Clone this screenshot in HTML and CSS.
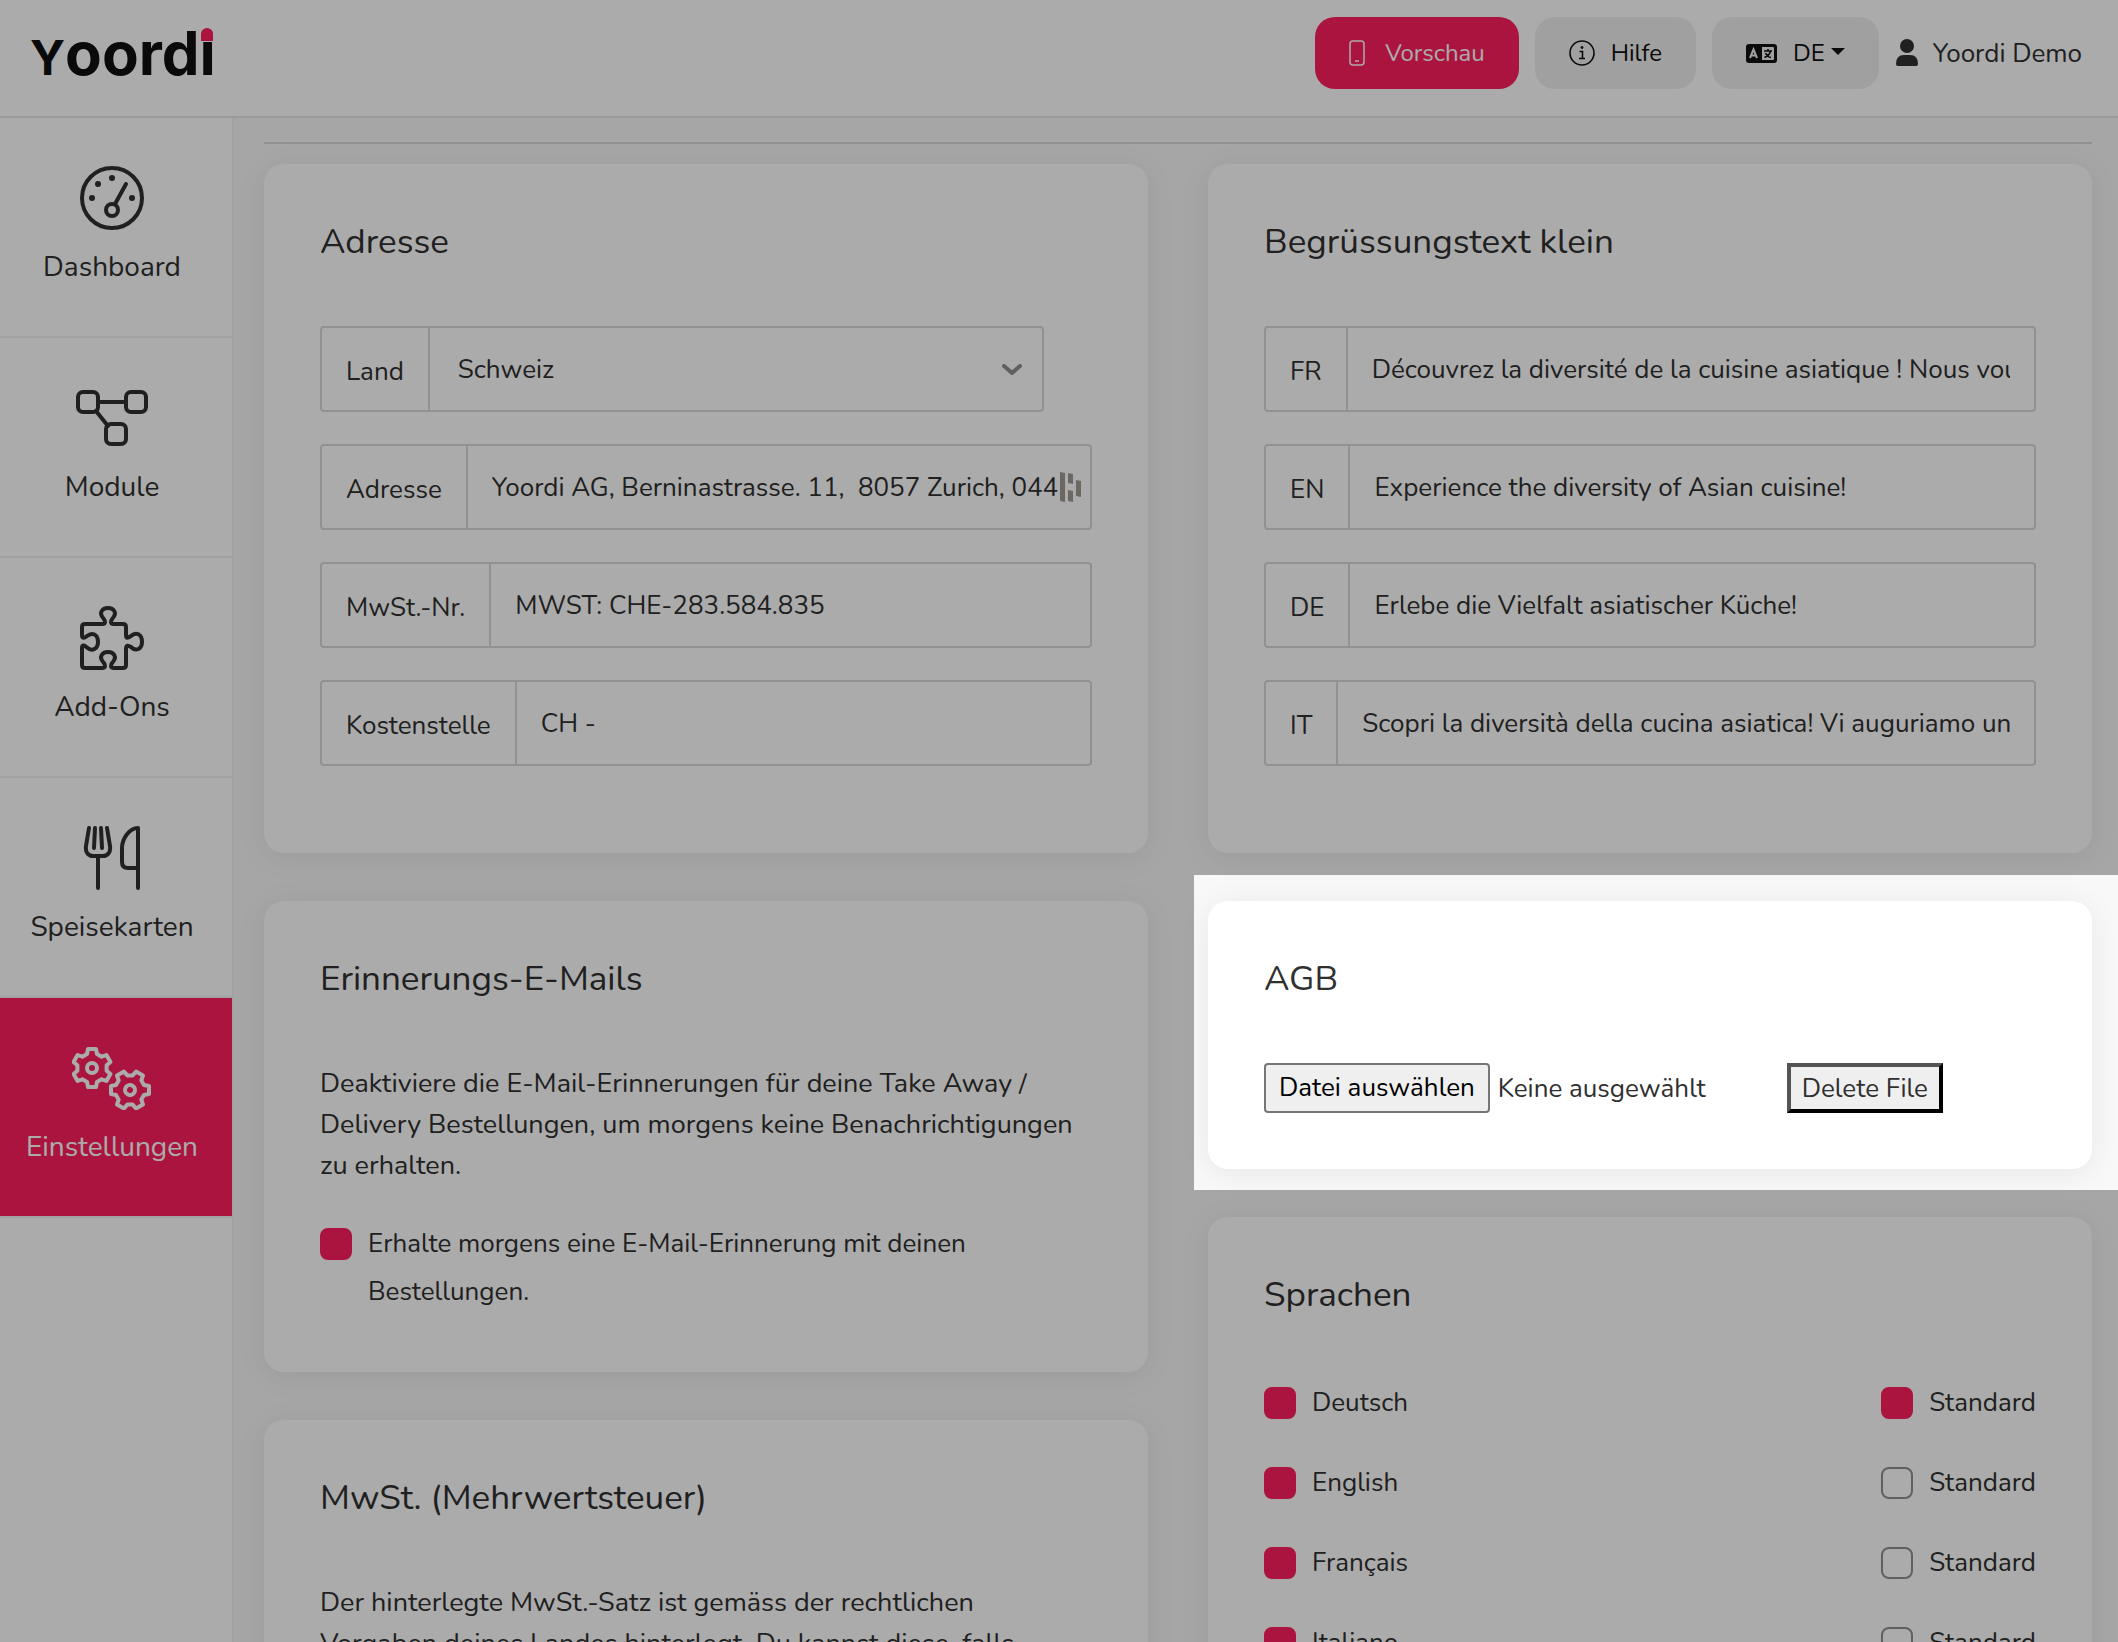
FILE: index.html
```html
<!DOCTYPE html>
<html lang="de">
<head>
  <meta charset="UTF-8">
  <meta name="viewport" content="width=device-width, initial-scale=1.0">
  <title>Yoordi - Einstellungen</title>
  <link rel="stylesheet" href="styles.css">
</head>
<body>
  <header class="topbar">
    <a class="logo" href="#"><span class="logo-y">Y</span>oord<span class="logo-i">i</span></a>
    <div class="topbar-actions">
      <button class="button button-primary">
        <svg width="16" height="26" viewBox="0 0 16 26" fill="none" stroke="currentColor" stroke-width="1.500"><rect x="1" y="1" width="14" height="24" rx="3"/><path d="M6 21h4"/></svg>
        Vorschau
      </button>
      <button class="button">
        <svg width="26" height="26" viewBox="0 0 26 26" fill="none" stroke="currentColor" stroke-width="1.600"><circle cx="13" cy="13" r="12"/><path d="M10.500 11.500h3v7M10 18.500h6"/><circle cx="13" cy="7.500" r="1" fill="currentColor" stroke-width="1"/></svg>
        Hilfe
      </button>
      <button class="button">
        <svg width="31" height="20" viewBox="0 0 31 20"><rect y="1" width="31" height="19" rx="3" fill="currentColor"/><path d="M16 4h11q1 0 1 1v11q0 1-1 1H16z" fill="#efefef"/><path d="M4 15L7.500 6.500L11 15M5 12.500h5" fill="none" stroke="#efefef" stroke-width="2"/><path d="M18 8h8M22 6v2M18.500 14.500q5-2 6-6.500M19.500 10q2 4 5.500 4.500" fill="none" stroke="currentColor" stroke-width="1.600"/></svg>
        <span>DE<span class="caret"></span></span>
      </button>
      <a class="user" href="#">
        <svg width="24" height="28" viewBox="0 0 24 28" fill="currentColor"><circle cx="12" cy="7" r="7"/><path d="M1 25q0-9 8-9h6q8 0 8 9 0 2-2 2H3q-2 0-2-2z"/></svg>
        Yoordi Demo
      </a>
    </div>
  </header>

  <div class="layout">
    <nav class="sidebar">
      <a class="nav-item" href="#">
        <svg width="64" height="64" viewBox="0 0 64 64"><circle cx="32" cy="32" r="30"/><circle cx="32" cy="44" r="6"/><path d="M35 38L46 18"/><g class="dots"><circle cx="12" cy="32" r="3"/><circle cx="18" cy="18" r="3"/><circle cx="32" cy="12" r="3"/><circle cx="52" cy="32" r="3"/></g></svg>
        Dashboard
      </a>
      <a class="nav-item" href="#">
        <svg width="72" height="64" viewBox="0 0 72 64"><rect x="2" y="6" width="20" height="20" rx="5"/><rect x="50" y="6" width="20" height="20" rx="5"/><rect x="30" y="38" width="20" height="20" rx="5"/><path d="M22 16h28M20 25l12 15"/></svg>
        Module
      </a>
      <a class="nav-item" href="#">
        <svg width="64" height="64" viewBox="0 0 64 64"><path d="M2 29V21Q2 18 5 18H22C26 18 25.500 15 23.500 12.500C18.500 7 22 2 28 2C34 2 37.500 7 32.500 12.500C30.500 15 30 18 34 18H43Q46 18 46 21V29C46 33 48 32 51 30C56 25.500 62 28 62 36C62 43 56 46 51 41C48 39 46 39 46 43V59Q46 62 43 62H34C30 62 30.500 58.500 32.500 56.500C37.500 51 34 46 28 46C22 46 18.500 51 23.500 56.500C25.500 58.500 26 62 22 62H5Q2 62 2 59V42C2 38.500 4 39 7 41.500C12 46 18 43 18 36C18 28 12 26 7 30C4 32.500 2 32.500 2 29Z"/></svg>
        Add-Ons
      </a>
      <a class="nav-item" href="#">
        <svg width="64" height="64" viewBox="0 0 64 64"><path d="M9 2L6 20C5 27 9 30 13 30H23C27 30 31 27 30 20L27 2M15 2L14 22M21 2L22 22M18 30V62M58 62V2C50 2 42 12 42 22V36Q42 42 48 42H58"/></svg>
        Speisekarten
      </a>
      <a class="nav-item active" href="#">
        <svg width="80" height="64" viewBox="0 0 80 64">
          <defs>
            <g id="gear"><path d="M-4-19L4-19 5-14 9.620-11.330 14.450-12.960 18.450-6.040 14.620-2.670 14.620 2.670 18.450 6.040 14.450 12.960 9.620 11.330 5 14 4 19-4 19-5 14-9.620 11.330-14.450 12.960-18.450 6.040-14.620 2.670-14.620-2.670-18.450-6.040-14.450-12.960-9.620-11.330-5-14Z"/><circle r="5"/></g>
          </defs>
          <use href="#gear" transform="translate(20 22)"/>
          <use href="#gear" transform="translate(58 44) rotate(30)"/>
        </svg>
        Einstellungen
      </a>
    </nav>

    <main class="content">
      <hr>
      <div class="columns">
        <div class="column">
          <section class="card">
            <h2>Adresse</h2>
            <div class="fields">
              <div class="field field-select">
                <label for="land">Land</label>
                <select id="land"><option>Schweiz</option></select>
                <svg class="chevron" width="20" height="12" viewBox="0 0 20 12"><path d="M2 2l8 7 8-7"/></svg>
              </div>
              <div class="field">
                <label for="adresse">Adresse</label>
                <input id="adresse" type="text" value="Yoordi AG, Berninastrasse. 11,&nbsp; 8057 Zurich, 044 272 11 11">
                <svg class="autofill" width="21" height="30" viewBox="0 0 21 30"><path d="M0 0l5 1v29l-5-1zM8 1l5 1v10l-5-1zM8 18l5 1v11l-5-1zM16 8l5 1v16l-5-1z"/></svg>
              </div>
              <div class="field">
                <label for="mwst-nr">MwSt.-Nr.</label>
                <input id="mwst-nr" type="text" value="MWST: CHE-283.584.835">
              </div>
              <div class="field">
                <label for="kostenstelle">Kostenstelle</label>
                <input id="kostenstelle" type="text" value="CH -">
              </div>
            </div>
          </section>

          <section class="card">
            <h2>Erinnerungs-E-Mails</h2>
            <p>Deaktiviere die E-Mail-Erinnerungen für deine Take Away / Delivery Bestellungen, um morgens keine Benachrichtigungen zu erhalten.</p>
            <label class="check"><input type="checkbox" checked> <span>Erhalte morgens eine E-Mail-Erinnerung mit deinen Bestellungen.</span></label>
          </section>

          <section class="card">
            <h2>MwSt. (Mehrwertsteuer)</h2>
            <p>Der hinterlegte MwSt.-Satz ist gemäss der rechtlichen Vorgaben deines Landes hinterlegt. Du kannst diese, falls notwendig, anpassen.</p>
          </section>
        </div>

        <div class="column">
          <section class="card">
            <h2>Begrüssungstext klein</h2>
            <div class="fields">
              <div class="field">
                <label for="text-fr">FR</label>
                <input id="text-fr" type="text" value="Découvrez la diversité de la cuisine asiatique ! Nous vous souhaitons un bon appétit !">
              </div>
              <div class="field">
                <label for="text-en">EN</label>
                <input id="text-en" type="text" value="Experience the diversity of Asian cuisine!">
              </div>
              <div class="field">
                <label for="text-de">DE</label>
                <input id="text-de" type="text" value="Erlebe die Vielfalt asiatischer Küche!">
              </div>
              <div class="field">
                <label for="text-it">IT</label>
                <input id="text-it" type="text" value="Scopri la diversità della cucina asiatica! Vi auguriamo un buon appetito!">
              </div>
            </div>
          </section>

          <section class="card spotlight">
            <h2>AGB</h2>
            <div class="upload">
              <div class="file">
                <input class="file-input" id="agb" type="file">
                <label class="file-button" for="agb">Datei auswählen</label>
                <span>Keine ausgewählt</span>
              </div>
              <button class="delete-button">Delete File</button>
            </div>
          </section>

          <section class="card">
            <h2>Sprachen</h2>
            <div class="languages">
              <div class="language">
                <label class="check"><input type="checkbox" checked> <span>Deutsch</span></label>
                <label class="check"><input type="checkbox" checked> <span>Standard</span></label>
              </div>
              <div class="language">
                <label class="check"><input type="checkbox" checked> <span>English</span></label>
                <label class="check"><input type="checkbox"> <span>Standard</span></label>
              </div>
              <div class="language">
                <label class="check"><input type="checkbox" checked> <span>Français</span></label>
                <label class="check"><input type="checkbox"> <span>Standard</span></label>
              </div>
              <div class="language">
                <label class="check"><input type="checkbox" checked> <span>Italiano</span></label>
                <label class="check"><input type="checkbox"> <span>Standard</span></label>
              </div>
            </div>
          </section>
        </div>
      </div>
    </main>
  </div>
</body>
</html>
```
FILE: styles.css
```css
* {
  box-sizing: border-box;
}

body {
  margin: 0;
  height: 100vh;
  overflow: hidden;
  background-color: #f8f8f8;
  color: #303030;
  font-family: Nunito, Lato, sans-serif;
  font-size: 26px;
}

button,
input,
select {
  font: inherit;
  color: inherit;
}

a {
  color: inherit;
  text-decoration: none;
}

/* Header */
.topbar {
  display: flex;
  justify-content: space-between;
  align-items: flex-start;
  height: 118px;
  padding: 17px 36px 0 30px;
  background-color: white;
  border-bottom: 2px solid #e8e8e8;
}

.logo {
  color: #101010;
  font-family: Inter, sans-serif;
  font-size: 60px;
  font-weight: 700;
  line-height: 72px;
}

.logo-y {
  font-size: 48px;
}

.logo-i {
  position: relative;
}

.logo-i::before {
  content: "";
  position: absolute;
  top: 11px;
  left: 2px;
  width: 12px;
  height: 13px;
  background-color: #ff1e5e;
  border-radius: 6px 6px 0 0;
}

.topbar-actions {
  display: flex;
  align-items: center;
  gap: 16px;
}

.button {
  display: flex;
  align-items: center;
  gap: 16px;
  height: 72px;
  padding: 0 34px;
  border: none;
  border-radius: 20px;
  background-color: #efefef;
  color: #101010;
  font-size: 24px;
  cursor: pointer;
}

.button-primary {
  gap: 20px;
  background-color: #ff1e5e;
  color: white;
}

.caret {
  display: inline-block;
  margin-left: 6px;
  border: 7px solid transparent;
  border-top-color: currentColor;
  border-bottom: none;
  vertical-align: 6px;
}

.user {
  display: flex;
  align-items: center;
  gap: 14px;
}

.layout {
  display: flex;
}

/* Sidebar */
.sidebar {
  flex: 0 0 234px;
  min-height: calc(100vh - 118px);
  background-color: white;
  border-right: 2px solid #f0f0f0;
}

.nav-item {
  display: flex;
  flex-direction: column;
  align-items: center;
  gap: 16px;
  height: 220px;
  padding: 48px 8px 0 0;
  border-bottom: 2px solid #f0f0f0;
  font-size: 28px;
  line-height: 42px;
}

.nav-item svg {
  fill: none;
  stroke: currentColor;
  stroke-width: 4;
  stroke-linecap: round;
  stroke-linejoin: round;
}

.nav-item .dots {
  fill: currentColor;
  stroke: none;
}

.nav-item.active {
  background-color: #ff1e5e;
  background-clip: padding-box;
  color: white;
}

/* Content */
.content {
  flex: 1;
  padding: 24px 26px 0 30px;
}

hr {
  margin: 0 0 20px;
  border: none;
  border-top: 2px solid #d8d8d8;
}

.columns {
  display: grid;
  grid-template-columns: 1fr 1fr;
  gap: 60px;
}

.column {
  display: flex;
  flex-direction: column;
  gap: 48px;
  min-width: 0;
}

.card {
  padding: 56px;
  background-color: white;
  border-radius: 20px;
  box-shadow: 0 4px 30px rgba(0, 0, 0, 0.07);
}

h2 {
  margin: 0 0 62px;
  font-size: 35px;
  font-weight: 400;
  line-height: 44px;
}

p {
  margin: 0 0 34px;
  font-size: 27px;
  line-height: 41px;
}

/* Form fields */
.fields {
  display: grid;
  gap: 32px;
  padding-bottom: 31px;
}

.field {
  position: relative;
  display: flex;
  height: 86px;
  border: 2px solid #d8d8d8;
  border-radius: 4px;
}

.field label {
  padding: 4px 24px 0;
  border-right: 2px solid #d8d8d8;
  line-height: 80px;
}

.field input,
.field select {
  flex: 1;
  min-width: 0;
  padding: 0 24px;
  border: none;
  background: none;
  appearance: none;
}

.field-select {
  margin-right: 48px;
}

.field select {
  padding-left: 28px;
}

.chevron {
  position: absolute;
  top: 36px;
  right: 20px;
  fill: none;
  stroke: #909090;
  stroke-width: 4;
  stroke-linecap: round;
  stroke-linejoin: round;
}

.autofill {
  position: absolute;
  top: 26px;
  right: 9px;
  fill: #a09a94;
}

.check {
  display: flex;
  gap: 16px;
  line-height: 48px;
}

.check input {
  flex: none;
  width: 32px;
  height: 32px;
  margin: 8px 0;
  border: 2px solid #909090;
  border-radius: 8px;
  appearance: none;
}

.check input:checked {
  background-color: #ff1e5e;
  border-color: #ff1e5e;
}

.languages {
  display: grid;
  gap: 32px;
}

.language {
  display: flex;
  justify-content: space-between;
}

/* Upload */
.upload {
  display: grid;
  grid-template-columns: 2fr 1fr;
  gap: 24px;
  justify-items: start;
}

.file {
  display: flex;
  align-items: center;
  gap: 8px;
}

.file-input {
  position: absolute;
  opacity: 0;
  pointer-events: none;
}

.file-button {
  height: 50px;
  padding: 0 13px;
  border: 2px solid #767676;
  border-radius: 4px;
  background-color: #efefef;
  color: black;
  line-height: 46px;
}

.delete-button {
  height: 50px;
  padding: 0 11px;
  border: 4px outset black;
  background-color: #efefef;
}

/* Dims the page around the highlighted card */
.spotlight {
  position: relative;
}

.spotlight::after {
  content: "";
  position: absolute;
  inset: -26px -26px -21px -14px;
  z-index: 10;
  box-shadow: 0 0 0 200vmax rgba(0, 0, 0, 0.33);
  pointer-events: none;
}
```
